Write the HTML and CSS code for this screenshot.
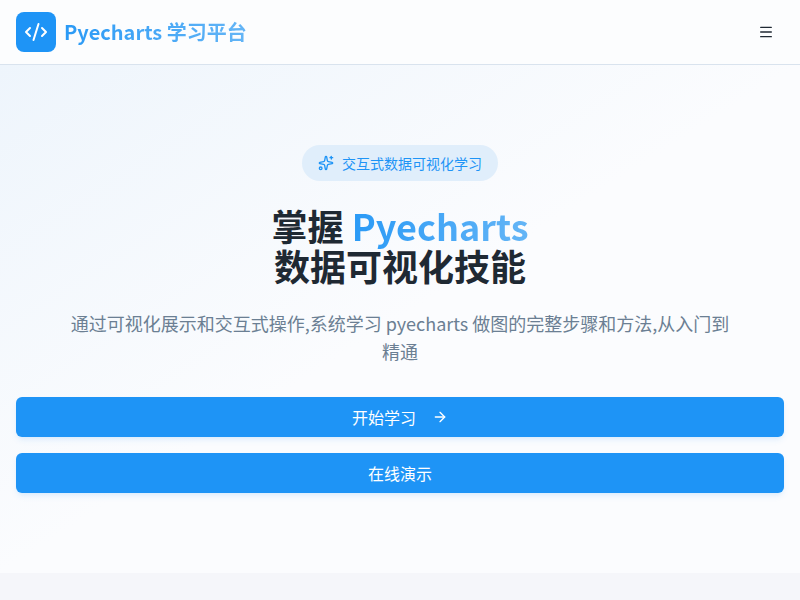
FILE: index.html
```html
<!DOCTYPE html>
<html lang="zh-CN">

<head>
    <meta charset="UTF-8">
    <meta name="viewport" content="width=device-width, initial-scale=1.0">
    <title>Pyecharts 学习平台</title>
    <link rel="stylesheet" href="styles.css">
</head>

<body>
    <header class="navbar">
        <div class="brand">
            <div class="brand-icon">
                <svg width="24" height="24" viewBox="0 0 24 24" fill="none" stroke="currentColor" stroke-width="2" stroke-linecap="round" stroke-linejoin="round">
                    <path d="m18 16 4-4-4-4"></path>
                    <path d="m6 8-4 4 4 4"></path>
                    <path d="m14.5 4-5 16"></path>
                </svg>
            </div>
            <span class="brand-name gradient-text">Pyecharts 学习平台</span>
        </div>
        <button class="menu-btn" aria-label="菜单">
            <svg width="16" height="16" viewBox="0 0 24 24" fill="none" stroke="currentColor" stroke-width="2" stroke-linecap="round" stroke-linejoin="round">
                <path d="M4 5h16"></path>
                <path d="M4 12h16"></path>
                <path d="M4 19h16"></path>
            </svg>
        </button>
    </header>

    <section class="hero">
        <div class="badge">
            <svg width="16" height="16" viewBox="0 0 24 24" fill="none" stroke="currentColor" stroke-width="2" stroke-linecap="round" stroke-linejoin="round">
                <path d="M11.017 2.814a1 1 0 0 1 1.966 0l1.051 5.558a2 2 0 0 0 1.594 1.594l5.558 1.051a1 1 0 0 1 0 1.966l-5.558 1.051a2 2 0 0 0-1.594 1.594l-1.051 5.558a1 1 0 0 1-1.966 0l-1.051-5.558a2 2 0 0 0-1.594-1.594l-5.558-1.051a1 1 0 0 1 0-1.966l5.558-1.051a2 2 0 0 0 1.594-1.594z"></path>
                <path d="M20 2v4"></path>
                <path d="M22 4h-4"></path>
                <circle cx="4" cy="20" r="2"></circle>
            </svg>
            <span>交互式数据可视化学习</span>
        </div>
        <h1 class="hero-title">掌握 <span class="gradient-text">Pyecharts</span><br>数据可视化技能</h1>
        <p class="hero-text">通过可视化展示和交互式操作,系统学习 pyecharts 做图的完整步骤和方法,从入门到精通</p>
        <div class="actions">
            <a class="btn" href="#">
                开始学习
                <svg width="16" height="16" viewBox="0 0 24 24" fill="none" stroke="currentColor" stroke-width="2" stroke-linecap="round" stroke-linejoin="round">
                    <path d="M5 12h14"></path>
                    <path d="m12 5 7 7-7 7"></path>
                </svg>
            </a>
            <a class="btn" href="#">在线演示</a>
        </div>
    </section>
</body>

</html>
```

FILE: styles.css
```css
* {
    box-sizing: border-box;
}
body {
    font-family: "Noto Sans CJK SC", "Noto Sans", sans-serif;
    margin: 0;
    background-color: #f5f6fa;
    color: #1f2933;
}
.navbar {
    display: flex;
    justify-content: space-between;
    align-items: center;
    height: 65px;
    padding: 0 16px;
    background-color: #fcfdfe;
    border-bottom: 1px solid #d9e3ee;
}
.brand {
    display: flex;
    align-items: center;
    gap: 8px;
}
.brand-icon {
    display: flex;
    align-items: center;
    justify-content: center;
    width: 40px;
    height: 40px;
    border-radius: 8px;
    background-color: #1e94f6;
    color: white;
}
.brand-name {
    font-size: 20px;
    line-height: 28px;
    font-weight: 700;
}
.gradient-text {
    background-image: linear-gradient(90deg, #2a9af6, #64b5f6);
    -webkit-background-clip: text;
    background-clip: text;
    color: transparent;
}
.menu-btn {
    display: flex;
    align-items: center;
    justify-content: center;
    width: 36px;
    height: 36px;
    padding: 0;
    border: none;
    background: none;
    color: #1f2933;
}
.hero {
    display: flex;
    flex-direction: column;
    align-items: center;
    padding: 80px 16px;
    background-image: linear-gradient(to bottom right, #eef5fc, #fbfcfe 50%);
}
.badge {
    display: flex;
    align-items: center;
    gap: 8px;
    height: 36px;
    padding: 0 16px;
    border-radius: 18px;
    background-color: #e0eefb;
    color: #1e94f6;
    font-size: 14px;
    line-height: 20px;
}
.hero-title {
    margin: 24px 0 0;
    font-size: 36px;
    line-height: 40px;
    font-weight: 700;
    text-align: center;
}
.hero-text {
    margin: 24px 0 0;
    max-width: 672px;
    font-size: 18px;
    line-height: 28px;
    color: #6b7f93;
    text-align: center;
}
.actions {
    display: flex;
    flex-direction: column;
    gap: 16px;
    width: 100%;
    margin-top: 32px;
}
.btn {
    display: flex;
    align-items: center;
    justify-content: center;
    gap: 16px;
    height: 40px;
    border-radius: 6px;
    background-color: #1e94f6;
    color: white;
    font-size: 16px;
    text-decoration: none;
    box-shadow: 0 4px 6px -1px rgba(30,148,246,0.1), 0 2px 4px -2px rgba(30,148,246,0.1);
}
```
